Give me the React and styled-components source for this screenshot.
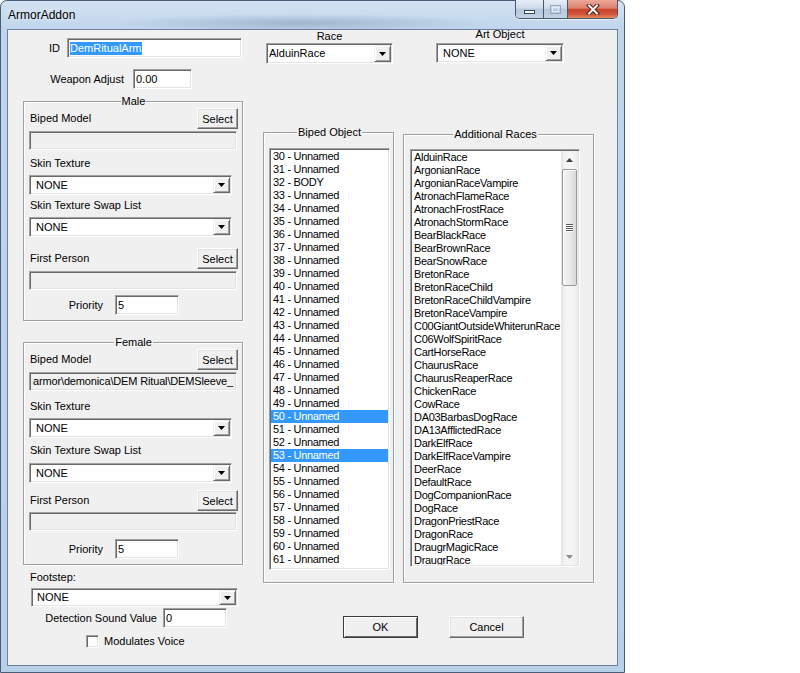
import styled, { createGlobalStyle } from "styled-components";

const GlobalStyle = createGlobalStyle`
  html, body {
    margin: 0;
    padding: 0;
    background: #ffffff;
  }
  body {
    font-family: "Liberation Sans", Arial, sans-serif;
    font-size: 11px;
    color: #000000;
  }
  * {
    box-sizing: border-box;
  }
`;

const bipedSlots = Array.from({ length: 32 }, (_, i) => {
  const n = 30 + i;
  return { n, label: `${n} - ${n === 32 ? "BODY" : "Unnamed"}` };
});
const selectedSlots = [50, 53];

const races = [
  "AlduinRace",
  "ArgonianRace",
  "ArgonianRaceVampire",
  "AtronachFlameRace",
  "AtronachFrostRace",
  "AtronachStormRace",
  "BearBlackRace",
  "BearBrownRace",
  "BearSnowRace",
  "BretonRace",
  "BretonRaceChild",
  "BretonRaceChildVampire",
  "BretonRaceVampire",
  "C00GiantOutsideWhiterunRace",
  "C06WolfSpiritRace",
  "CartHorseRace",
  "ChaurusRace",
  "ChaurusReaperRace",
  "ChickenRace",
  "CowRace",
  "DA03BarbasDogRace",
  "DA13AfflictedRace",
  "DarkElfRace",
  "DarkElfRaceVampire",
  "DeerRace",
  "DefaultRace",
  "DogCompanionRace",
  "DogRace",
  "DragonPriestRace",
  "DragonRace",
  "DraugrMagicRace",
  "DraugrRace",
];

// vertical spacing inside the Male / Female boxes (they differ by a few px)
const maleSpacing = { path: 2, label1: 7, combo1: 5, label2: 4, combo2: 5, first: 11, path2: 2, priority: 5, bottom: 5 };
const femaleSpacing = { path: 2, label1: 9, combo1: 5, label2: 6, combo2: 6, first: 7, path2: 1, priority: 8, bottom: 5 };

const sunken = `
  border: 1px solid;
  border-color: #a0a0a0 #ffffff #ffffff #a0a0a0;
  box-shadow: inset 1px 1px 0 #696969, inset -1px -1px 0 #e3e3e3;
`;

/* ---------- window chrome ---------- */

const Window = styled.div`
  width: 625px;
  height: 673px;
  display: flex;
  flex-direction: column;
  padding: 0 6px 6px;
  border: 1px solid #4a5d77;
  border-radius: 7px 7px 0 0;
  background:
    radial-gradient(ellipse 190px 9px at 300px 22px, rgba(96, 118, 148, 0.35), transparent),
    linear-gradient(180deg, #d3e2f2 0px, #c0d5ec 28px, #b9d0e9 100%);
`;

const TitleBar = styled.div`
  height: 28px;
  flex-shrink: 0;
  display: flex;
  align-items: center;
  justify-content: space-between;
`;

const Title = styled.span`
  padding-left: 1px;
  font-size: 12px;
  text-shadow: 0 0 6px rgba(255, 255, 255, 0.9);
`;

const CaptionButtons = styled.div`
  align-self: flex-start;
  margin-top: -1px;
  display: flex;
  height: 19px;
  border: 1px solid #48596f;
  border-top: none;
  border-radius: 0 0 5px 5px;
  overflow: hidden;
  box-shadow: 0 1px 0 rgba(255, 255, 255, 0.6);
`;

const CaptionButton = styled.div`
  width: ${(p) => p.$w}px;
  display: flex;
  align-items: center;
  justify-content: center;
  background: ${(p) =>
    p.$close
      ? "linear-gradient(180deg, #eaa898 0%, #de8270 45%, #c8432b 52%, #cf5237 78%, #e38b63 100%)"
      : "linear-gradient(180deg, #e6edf6 0%, #cfdbe9 45%, #b6c8dd 52%, #c3d3e6 100%)"};

  & + & {
    border-left: 1px solid #48596f;
  }
`;

const Client = styled.div`
  flex: 1;
  display: flex;
  align-items: flex-start;
  padding-left: 15px;
  background: #f0f0f0;
  border: 1px solid #6c809b;
`;

/* ---------- shared controls ---------- */

const LeftColumn = styled.div`
  width: 220px;
  padding-top: 8px;
  display: flex;
  flex-direction: column;
  align-items: flex-start;
`;

const FieldRow = styled.div`
  display: grid;
  grid-template-columns: ${(p) => p.$labelW}px ${(p) => p.$inputW}px;
  column-gap: ${(p) => p.$gap}px;
  align-items: center;
  margin-top: ${(p) => p.$mt || 0}px;
`;

const RowLabel = styled.span`
  text-align: right;
  white-space: nowrap;
  line-height: 13px;
`;

const FieldLabel = styled.div`
  line-height: 13px;
  white-space: nowrap;
  margin-top: ${(p) => p.$mt || 0}px;
  padding-left: ${(p) => p.$pl || 0}px;
`;

const EditBox = styled.div`
  height: 20px;
  display: flex;
  align-items: center;
  padding: 0 2px;
  line-height: 13px;
  white-space: nowrap;
  overflow: hidden;
  background: #ffffff;
  ${sunken}
`;

const SelectedText = styled.span`
  background: #3399ff;
  color: #ffffff;
`;

const PathBox = styled.div`
  width: 208px;
  height: 19px;
  margin-top: ${(p) => p.$mt || 0}px;
  display: flex;
  align-items: center;
  padding: 0 1px 0 3px;
  line-height: 13px;
  white-space: nowrap;
  overflow: hidden;
  background: #f0f0f0;
  ${sunken}
`;

const PathText = styled.span`
  letter-spacing: -0.15px;
`;

const PushButton = styled.button`
  width: ${(p) => p.$w}px;
  height: ${(p) => p.$h}px;
  padding: 0;
  font: inherit;
  color: #000000;
  background: #f0f0f0;
  border: 1px solid;
  border-color: ${(p) => (p.$default ? "#3c3c3c" : "#ffffff #696969 #696969 #ffffff")};
  box-shadow: ${(p) =>
    p.$default
      ? "inset 1px 1px 0 #ffffff, inset -1px -1px 0 #696969"
      : "inset -1px -1px 0 #a0a0a0, inset 1px 1px 0 #e3e3e3"};
`;

const ComboFrame = styled.div`
  width: ${(p) => p.$w}px;
  height: ${(p) => p.$h}px;
  margin-top: ${(p) => p.$mt || 0}px;
  margin-left: ${(p) => p.$ml || 0}px;
  display: flex;
  align-items: stretch;
  padding: 1px;
  background: #ffffff;
  ${sunken}
`;

const ComboText = styled.span`
  flex: 1;
  display: flex;
  align-items: center;
  padding-left: ${(p) => p.$pad}px;
  line-height: 13px;
  white-space: nowrap;
  overflow: hidden;
`;

const DropButton = styled.span`
  width: 17px;
  display: flex;
  align-items: center;
  justify-content: center;
  background: #f0f0f0;
  border: 1px solid;
  border-color: #f0f0f0 #696969 #696969 #f0f0f0;
  box-shadow: inset 1px 1px 0 #ffffff, inset -1px -1px 0 #a0a0a0;
`;

const ComboBox = ({ value, w, h = 20, mt, ml, pad = 5 }) => (
  <ComboFrame $w={w} $h={h} $mt={mt} $ml={ml}>
    <ComboText $pad={pad}>{value}</ComboText>
    <DropButton>
      <svg width="7" height="4" viewBox="0 0 7 4">
        <polygon points="0,0 7,0 3.5,4" fill="#000000" />
      </svg>
    </DropButton>
  </ComboFrame>
);

const GroupBox = styled.fieldset`
  width: ${(p) => p.$w}px;
  min-width: 0;
  margin: ${(p) => p.$mt || 0}px 0 0;
  padding: ${(p) => p.$pad};
  border: 1px solid #a0a0a0;
  box-shadow: inset 1px 1px 0 #ffffff, 1px 1px 0 #ffffff;
`;

const GroupCaption = styled.legend`
  margin: 0 auto;
  padding: 0 1px;
  line-height: 13px;
  background: #f0f0f0;
`;

const ModelRow = styled.div`
  height: 21px;
  margin-top: ${(p) => p.$mt || 0}px;
  display: flex;
  align-items: center;
  justify-content: space-between;
`;

const CheckRow = styled.label`
  margin-top: ${(p) => p.$mt || 0}px;
  padding-left: 63px;
  display: flex;
  align-items: center;
  gap: 5px;
  line-height: 13px;
`;

const CheckBox = styled.span`
  width: 13px;
  height: 13px;
  background: #ffffff;
  ${sunken}
`;

/* ---------- right side ---------- */

const RightArea = styled.div`
  margin-left: 20px;
  display: flex;
  flex-direction: column;
`;

const Columns = styled.div`
  display: flex;
  align-items: flex-start;
`;

const Column = styled.div`
  width: ${(p) => p.$w}px;
  margin-left: ${(p) => p.$ml || 0}px;
  display: flex;
  flex-direction: column;
  align-items: flex-start;
`;

const HeaderField = styled.div`
  width: ${(p) => p.$w}px;
  margin-left: ${(p) => p.$ml}px;
  display: flex;
  flex-direction: column;
  align-items: center;
`;

const HeaderLabel = styled.span`
  line-height: 13px;
  margin-top: ${(p) => (p.$raise ? -2 : 0)}px;
  margin-bottom: ${(p) => (p.$raise ? 2 : 0)}px;
`;

const ListBox = styled.div`
  width: ${(p) => p.$w}px;
  height: ${(p) => p.$h}px;
  margin-top: ${(p) => p.$mt}px;
  display: flex;
  padding: 1px;
  overflow: hidden;
  background: #ffffff;
  ${sunken}
`;

const ListItems = styled.div`
  flex: 1;
  min-width: 0;
  overflow: hidden;
`;

const ListItem = styled.div`
  height: 13px;
  line-height: 13px;
  padding-left: 2px;
  white-space: nowrap;
  letter-spacing: -0.3px;
  background: ${(p) => (p.$selected ? "#3399ff" : "transparent")};
  color: ${(p) => (p.$selected ? "#ffffff" : "#000000")};
`;

const ScrollBar = styled.div`
  width: 17px;
  flex-shrink: 0;
  display: flex;
  flex-direction: column;
  background: linear-gradient(90deg, #e4e4e4 0%, #f4f4f4 25%, #f4f4f4 75%, #eaeaea 100%);
`;

const ScrollArrow = styled.div`
  height: 17px;
  display: flex;
  align-items: center;
  justify-content: center;
`;

const ScrollTrack = styled.div`
  flex: 1;
  padding: 1px 1px 0;
`;

const ScrollThumb = styled.div`
  height: 117px;
  display: flex;
  flex-direction: column;
  align-items: center;
  justify-content: center;
  gap: 1px;
  border: 1px solid #999999;
  border-radius: 2px;
  background: linear-gradient(90deg, #f6f6f6 0%, #e9e9e9 50%, #d8d8d8 100%);
  box-shadow: inset 1px 1px 0 #ffffff;
`;

const Grip = styled.span`
  width: 7px;
  height: 1px;
  background: #5c5c5c;
  box-shadow: 0 1px 0 #ffffff;
`;

const ButtonRow = styled.div`
  margin-top: 33px;
  padding-left: 80px;
  display: flex;
  gap: 31px;
`;

const GenderGroup = ({ caption, modelPath, mt, s }) => (
  <GroupBox $w={220} $mt={mt} $pad={`0 4px ${s.bottom}px 5px`}>
    <GroupCaption>{caption}</GroupCaption>
    <ModelRow>
      <FieldLabel $pl={1}>Biped Model</FieldLabel>
      <PushButton $w={41} $h={21}>Select</PushButton>
    </ModelRow>
    <PathBox $mt={s.path}>{modelPath && <PathText>{modelPath}</PathText>}</PathBox>
    <FieldLabel $mt={s.label1} $pl={1}>Skin Texture</FieldLabel>
    <ComboBox mt={s.combo1} w={203} value="NONE" />
    <FieldLabel $mt={s.label2} $pl={1}>Skin Texture Swap List</FieldLabel>
    <ComboBox mt={s.combo2} w={203} value="NONE" />
    <ModelRow $mt={s.first}>
      <FieldLabel $pl={1}>First Person</FieldLabel>
      <PushButton $w={41} $h={21}>Select</PushButton>
    </ModelRow>
    <PathBox $mt={s.path2} />
    <FieldRow $mt={s.priority} $labelW={74} $gap={12} $inputW={64}>
      <RowLabel>Priority</RowLabel>
      <EditBox>5</EditBox>
    </FieldRow>
  </GroupBox>
);

export default function App() {
  return (
    <>
      <GlobalStyle />
      <Window>
        <TitleBar>
          <Title>ArmorAddon</Title>
          <CaptionButtons>
            <CaptionButton $w={27}>
              <svg width="11" height="12" viewBox="0 0 11 12">
                <rect x="0.5" y="7.5" width="10" height="3" fill="#ffffff" stroke="#33445c" />
              </svg>
            </CaptionButton>
            <CaptionButton $w={24}>
              <svg width="11" height="9" viewBox="0 0 11 9">
                <rect x="0.5" y="0.5" width="10" height="8" fill="none" stroke="#93a6bd" />
                <rect x="2.5" y="2.5" width="6" height="4" fill="none" stroke="#e4ecf5" />
              </svg>
            </CaptionButton>
            <CaptionButton $w={50} $close>
              <svg width="14" height="11" viewBox="0 0 14 11">
                <path d="M3 1.5 L11 9.5 M11 1.5 L3 9.5" stroke="#5a1d12" strokeWidth="4" strokeLinecap="square" />
                <path d="M3 1.5 L11 9.5 M11 1.5 L3 9.5" stroke="#ffffff" strokeWidth="2" strokeLinecap="square" />
              </svg>
            </CaptionButton>
          </CaptionButtons>
        </TitleBar>

        <Client>
          <LeftColumn>
            <FieldRow $labelW={37} $gap={7} $inputW={175}>
              <RowLabel>ID</RowLabel>
              <EditBox>
                <SelectedText>DemRitualArm</SelectedText>
              </EditBox>
            </FieldRow>
            <FieldRow $mt={11} $labelW={101} $gap={9} $inputW={59}>
              <RowLabel>Weapon Adjust</RowLabel>
              <EditBox>0.00</EditBox>
            </FieldRow>

            <GenderGroup caption="Male" mt={6} modelPath="" s={maleSpacing} />
            <GenderGroup
              caption="Female"
              mt={15}
              modelPath={"armor\\demonica\\DEM Ritual\\DEMSleeve_"}
              s={femaleSpacing}
            />

            <FieldLabel $mt={6} $pl={7}>Footstep:</FieldLabel>
            <ComboBox mt={4} ml={8} w={207} h={19} pad={4} value="NONE" />
            <FieldRow $mt={1} $labelW={134} $gap={6} $inputW={64}>
              <RowLabel>Detection Sound Value</RowLabel>
              <EditBox>0</EditBox>
            </FieldRow>
            <CheckRow $mt={7}>
              <CheckBox />
              Modulates Voice
            </CheckRow>
          </LeftColumn>

          <RightArea>
            <Columns>
              <Column $w={131}>
                <HeaderField $w={127} $ml={3}>
                  <HeaderLabel>Race</HeaderLabel>
                  <ComboBox w={127} h={21} pad={1} value="AlduinRace" />
                </HeaderField>
                <GroupBox $w={131} $mt={62} $pad="0 3px 12px 5px">
                  <GroupCaption>Biped Object</GroupCaption>
                  <ListBox $w={121} $h={422} $mt={9}>
                    <ListItems>
                      {bipedSlots.map((s) => (
                        <ListItem key={s.n} $selected={selectedSlots.includes(s.n)}>
                          {s.label}
                        </ListItem>
                      ))}
                    </ListItems>
                  </ListBox>
                </GroupBox>
              </Column>

              <Column $w={191} $ml={9}>
                <HeaderField $w={128} $ml={33}>
                  <HeaderLabel $raise>Art Object</HeaderLabel>
                  <ComboBox w={128} h={20} pad={5} value="NONE" />
                </HeaderField>
                <GroupBox $w={191} $mt={65} $pad="0 12px 15px 6px">
                  <GroupCaption>Additional Races</GroupCaption>
                  <ListBox $w={170} $h={418} $mt={8}>
                    <ListItems>
                      {races.map((r) => (
                        <ListItem key={r}>{r}</ListItem>
                      ))}
                    </ListItems>
                    <ScrollBar>
                      <ScrollArrow>
                        <svg width="7" height="4" viewBox="0 0 7 4">
                          <polygon points="0,4 7,4 3.5,0" fill="#404040" />
                        </svg>
                      </ScrollArrow>
                      <ScrollTrack>
                        <ScrollThumb>
                          <Grip />
                          <Grip />
                          <Grip />
                          <Grip />
                        </ScrollThumb>
                      </ScrollTrack>
                      <ScrollArrow>
                        <svg width="7" height="4" viewBox="0 0 7 4">
                          <polygon points="0,0 7,0 3.5,4" fill="#8c8c8c" />
                        </svg>
                      </ScrollArrow>
                    </ScrollBar>
                  </ListBox>
                </GroupBox>
              </Column>
            </Columns>

            <ButtonRow>
              <PushButton $w={75} $h={22} $default>OK</PushButton>
              <PushButton $w={75} $h={22}>Cancel</PushButton>
            </ButtonRow>
          </RightArea>
        </Client>
      </Window>
    </>
  );
}
